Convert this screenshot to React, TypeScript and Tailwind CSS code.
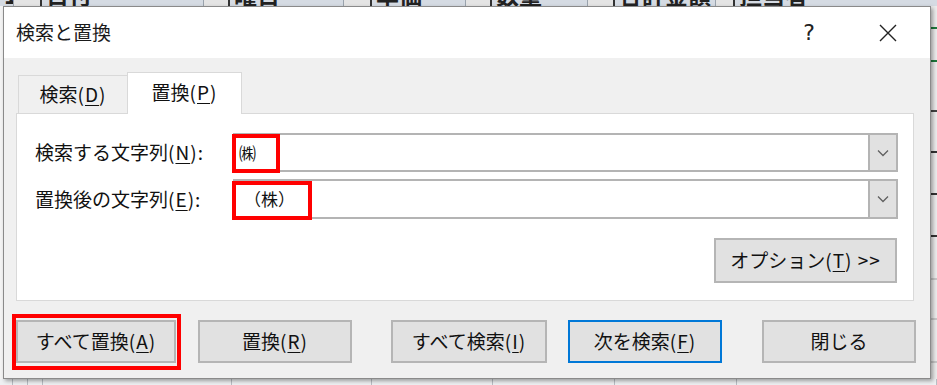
import React from "react";

const font = { fontFamily: '"Noto Sans CJK JP", "Noto Sans", sans-serif' };

function U({ c }: { c: string }) {
  return <span className="underline underline-offset-[3px] decoration-1">{c}</span>;
}

function L({ children }: { children: React.ReactNode }) {
  return <span className="tracking-[1px]">{children}</span>;
}

function HeaderStrip() {
  const cells: { w: number; text?: string; kind: "cell" | "btn" }[] = [
    { w: 13, text: "1", kind: "cell" },
    { w: 29, kind: "btn" },
    { w: 161, text: "日付", kind: "cell" },
    { w: 27, kind: "btn" },
    { w: 113, text: "曜日", kind: "cell" },
    { w: 29, kind: "btn" },
    { w: 93, text: "単価", kind: "cell" },
    { w: 27, kind: "btn" },
    { w: 95, text: "数量", kind: "cell" },
    { w: 28, kind: "btn" },
    { w: 100, text: "合計金額", kind: "cell" },
    { w: 20, kind: "btn" },
    { w: 192, text: "担当者", kind: "cell" },
  ];
  return (
    <div className="flex h-[6px] w-full overflow-hidden bg-[#d5dbe3]">
      {cells.map((c, i) =>
        c.kind === "btn" ? (
          <div
            key={i}
            className="h-full shrink-0 border-l border-[#9aa3ad] border-r-2 border-r-[#333] bg-[#e4e4e4]"
            style={{ width: c.w }}
          />
        ) : (
          <div key={i} className="h-full shrink-0 overflow-hidden" style={{ width: c.w }}>
            <div className="mt-[-17px] pl-[4px] text-[23px] leading-[23px] font-bold text-[#222] whitespace-nowrap">
              {c.text}
            </div>
          </div>
        )
      )}
    </div>
  );
}

function RightStrip() {
  const rows = [
    { h: 23, c: "border-[#1e7a3c]" },
    { h: 33, c: "border-[#1e7a3c]" },
    { h: 50, c: "border-[#444]" },
    { h: 41, c: "border-[#333]" },
    { h: 42, c: "border-[#333]" },
    { h: 42, c: "border-[#333]" },
    { h: 43, c: "border-[#c8c8c8]" },
    { h: 40, c: "border-[#c8c8c8]" },
    { h: 43, c: "border-[#c8c8c8]" },
  ];
  return (
    <div className="flex w-[6px] flex-col bg-[#ececec]">
      {rows.map((r, i) => (
        <div key={i} className={`shrink-0 border-b-2 ${r.c}`} style={{ height: r.h }} />
      ))}
    </div>
  );
}

function BottomStrip() {
  const cols = [13, 15, 15, 189, 140, 121, 122, 122, 200];
  return (
    <div className="flex h-[6px] w-full bg-[#eef0f2]">
      {cols.map((w, i) => (
        <div key={i} className="h-full shrink-0 border-r border-[#b9bec4]" style={{ width: w }} />
      ))}
    </div>
  );
}

function Chevron() {
  return (
    <svg width="12" height="8" viewBox="0 0 12 8" fill="none">
      <path d="M1 1.5 L6 6.5 L11 1.5" stroke="#606060" strokeWidth="1.3" />
    </svg>
  );
}

function Combo({ text, textClass }: { text: string; textClass: string }) {
  return (
    <div className="flex h-full w-[665px] border-2 border-[#b4b4b4] bg-white">
      <div className={`flex flex-1 items-center text-[17px] text-[#111] ${textClass}`}>{text}</div>
      <div className="flex w-[28px] items-center justify-center border-l-2 border-[#b4b4b4] bg-[#e1e1e1]">
        <Chevron />
      </div>
    </div>
  );
}

function Btn({
  w,
  children,
  className = "",
}: {
  w: number;
  children: React.ReactNode;
  className?: string;
}) {
  return (
    <div
      className={`flex h-[43px] shrink-0 items-center justify-center border-2 bg-[#e1e1e1] text-[19px] text-[#111] ${className || "border-[#b5b5b5]"}`}
      style={{ width: w }}
    >
      {children}
    </div>
  );
}

export default function App() {
  return (
    <div className="relative h-[385px] w-[937px] overflow-hidden bg-white" style={font}>
      {/* spreadsheet behind */}
      <div className="flex h-full w-full flex-col">
        <HeaderStrip />
        <div className="flex flex-1">
          <div className="flex-1 bg-[#f4f4f4]" />
          <RightStrip />
        </div>
        <BottomStrip />
      </div>

      {/* dialog */}
      <div className="absolute left-[3px] top-[6px] flex h-[373px] w-[928px] flex-col border border-[#8a8a8a] shadow-[2px_2px_4px_rgba(0,0,0,0.35)]">
        <div className="flex h-[51px] items-center bg-white">
          <div className="pl-[12px] text-[19px] text-[#1a1a1a]">検索と置換</div>
          <div className="ml-auto flex items-center">
            <div
              className="flex w-[40px] justify-center text-[22px] text-[#222]"
              style={{ fontFamily: '"DejaVu Sans", sans-serif' }}
            >
              ?
            </div>
            <div className="ml-[36px] mr-[19px] flex w-[46px] justify-center">
              <svg width="18" height="18" viewBox="0 0 18 18">
                <path d="M1 1 L17 17 M17 1 L1 17" stroke="#222" strokeWidth="1.4" />
              </svg>
            </div>
          </div>
        </div>

        <div className="flex flex-1 flex-col bg-[#f0f0f0] px-[12px] pt-[14px]">
          {/* tabs */}
          <div className="relative z-10 flex h-[41px] items-end">
            <div className="ml-[2px] flex h-[38px] w-[109px] items-center justify-center border-l border-t border-[#d9d9d9] text-[19px] text-[#111]">
              検索<L>(<U c="D" />)</L>
            </div>
            <div className="mb-[-1px] flex h-[42px] w-[115px] items-center justify-center border border-b-0 border-[#d9d9d9] bg-white pb-[2px] text-[19px] text-[#111]">
              置換<L>(<U c="P" />)</L>
            </div>
          </div>

          {/* panel */}
          <div className="flex h-[188px] w-[898px] flex-col border border-[#d9d9d9] bg-white pl-[18px] pt-[19px]">
            <div className="flex h-[39px] items-center">
              <div className="w-[198px] text-[19px] text-[#111]">
                検索する文字列<L>(<U c="N" />):</L>
              </div>
              <Combo text="㈱" textClass="pl-[4px]" />
            </div>
            <div className="mt-[7px] flex h-[40px] items-center">
              <div className="w-[198px] text-[19px] text-[#111]">
                置換後の文字列<L>(<U c="E" />):</L>
              </div>
              <Combo text="（株）" textClass="pl-[9px]" />
            </div>
            <div className="mt-[19px] flex">
              <div className="ml-[679px] flex h-[45px] w-[183px] items-center justify-center border-2 border-[#b5b5b5] bg-[#e1e1e1] text-[19px] text-[#111]">
                オプション<L>(<U c="T" />) &gt;&gt;</L>
              </div>
            </div>
          </div>

          {/* bottom buttons */}
          <div className="mt-[19px] flex">
            <Btn w={160}>
              すべて置換<L>(<U c="A" />)</L>
            </Btn>
            <div className="w-[22px] shrink-0" />
            <Btn w={154}>
              置換<L>(<U c="R" />)</L>
            </Btn>
            <div className="w-[39px] shrink-0" />
            <Btn w={156}>
              すべて検索<L>(<U c="I" />)</L>
            </Btn>
            <div className="w-[21px] shrink-0" />
            <Btn w={154} className="border-[#0078d7]">
              次を検索<L>(<U c="F" />)</L>
            </Btn>
            <div className="w-[40px] shrink-0" />
            <Btn w={154}>閉じる</Btn>
          </div>
        </div>
      </div>

      {/* red annotation boxes */}
      <div className="absolute left-[232px] top-[134px] h-[39px] w-[48px] border-4 border-[#ff0000]" />
      <div className="absolute left-[232px] top-[181px] h-[39px] w-[80px] border-4 border-[#ff0000]" />
      <div className="absolute left-[12px] top-[314px] h-[56px] w-[169px] border-4 border-[#ff0000]" />
    </div>
  );
}
